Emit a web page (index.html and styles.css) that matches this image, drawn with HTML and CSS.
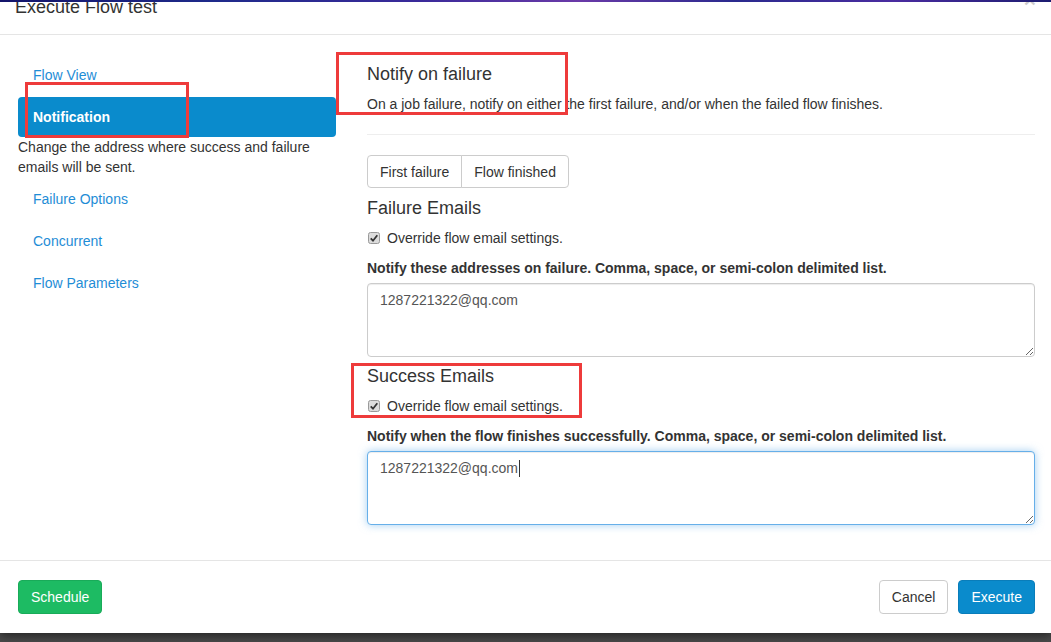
FILE: index.html
```html
<!DOCTYPE html>
<html lang="en">
<head>
<meta charset="utf-8">
<title>Execute Flow test</title>
<link rel="stylesheet" href="styles.css">
</head>
<body>
<div class="topstrip"></div>
<div class="modal">
  <div class="modal-header">
    <button class="close" type="button">&times;</button>
    <h4 class="modal-title">Execute Flow test</h4>
  </div>
  <div class="modal-body">
    <div class="sidebar">
      <ul class="nav">
        <li><a href="#">Flow View</a></li>
        <li class="active">
          <a href="#">Notification</a>
          <div class="nav-desc">Change the address where success and failure emails will be sent.</div>
        </li>
        <li><a href="#">Failure Options</a></li>
        <li><a href="#">Concurrent</a></li>
        <li><a href="#">Flow Parameters</a></li>
      </ul>
    </div>
    <div class="content">
      <h4 class="first">Notify on failure</h4>
      <p class="help">On a job failure, notify on either the first failure, and/or when the failed flow finishes.</p>
      <hr class="sep">
      <div class="btn-group">
        <button class="btn btn-default" type="button">First failure</button>
        <button class="btn btn-default" type="button">Flow finished</button>
      </div>
      <h4 class="after-group">Failure Emails</h4>
      <div class="checkbox">
        <span class="cb"><svg width="12" height="12" viewBox="0 0 12 12"><rect x="0.5" y="0.5" width="11" height="11" rx="2" fill="#dcdcdc" stroke="#9a9a9a"/><path d="M2.7 6.3 L5 8.7 L9.3 3.3" fill="none" stroke="#333" stroke-width="1.8"/></svg></span>
        <span>Override flow email settings.</span>
      </div>
      <label class="field-label">Notify these addresses on failure. Comma, space, or semi-colon delimited list.</label>
      <textarea class="form-control" rows="3">1287221322@qq.com</textarea>
      <h4 class="tight">Success Emails</h4>
      <div class="checkbox">
        <span class="cb"><svg width="12" height="12" viewBox="0 0 12 12"><rect x="0.5" y="0.5" width="11" height="11" rx="2" fill="#dcdcdc" stroke="#9a9a9a"/><path d="M2.7 6.3 L5 8.7 L9.3 3.3" fill="none" stroke="#333" stroke-width="1.8"/></svg></span>
        <span>Override flow email settings.</span>
      </div>
      <label class="field-label">Notify when the flow finishes successfully. Comma, space, or semi-colon delimited list.</label>
      <div class="field-wrap">
        <textarea class="form-control focused" rows="3">1287221322@qq.com</textarea>
        <span class="caret"></span>
      </div>
    </div>
  </div>
  <div class="modal-footer">
    <button class="btn btn-success" type="button">Schedule</button>
    <div class="footer-right">
      <button class="btn btn-default" type="button">Cancel</button>
      <button class="btn btn-primary" type="button">Execute</button>
    </div>
  </div>
</div>
<div class="annot annot-1"></div>
<div class="annot annot-2"></div>
<div class="annot annot-3"></div>
</body>
</html>
```

FILE: styles.css
```css
* { box-sizing: border-box; }

html, body {
  margin: 0;
  padding: 0;
  height: 100%;
}

body {
  background: linear-gradient(180deg, #666 0%, #4a4a4a 100%);
  font-family: "Liberation Sans", Arial, Helvetica, sans-serif;
  font-size: 14px;
  line-height: 20px;
  color: #333;
  overflow: hidden;
  position: relative;
}

.topstrip {
  position: absolute;
  left: 0;
  top: 0;
  width: 100%;
  height: 2px;
  z-index: 5;
  background: linear-gradient(90deg, #14146a 0%, #1e2a8a 20%, #3a2a9a 40%, #6a3aa8 55%, #2a2a8e 70%, #4a2ca0 85%, #1c1c70 100%);
}

.modal {
  width: 1051px;
  margin-top: -22px;
  background: #fff;
  box-shadow: 0 3px 9px rgba(0, 0, 0, 0.5);
}

.modal-header {
  padding: 16px 15px 14px;
  border-bottom: 1px solid #e5e5e5;
}

.modal-title {
  margin: 0;
  font-size: 18px;
  font-weight: normal;
  line-height: 26px;
  color: #333;
}

.close {
  float: right;
  margin-top: -5px;
  padding: 0;
  border: 0;
  background: transparent;
  font-family: "Liberation Sans", Arial, sans-serif;
  font-size: 21px;
  font-weight: bold;
  line-height: 1;
  color: #000;
  opacity: 0.2;
}

.modal-body {
  display: grid;
  grid-template-columns: 318px 1fr;
  column-gap: 31px;
  padding: 20px 16px 35px 18px;
}

.nav {
  list-style: none;
  margin: 0;
  padding: 0;
}

.nav li + li { margin-top: 2px; }

.nav a {
  display: block;
  padding: 10px 15px;
  line-height: 20px;
  color: #1f8dd6;
  text-decoration: none;
  border-radius: 4px;
}

.nav .active a {
  background: #0a8bcc;
  color: #fff;
  font-weight: bold;
}

.nav-desc {
  color: #333;
  line-height: 20px;
}

.content h4 {
  margin: 10px 0;
  font-size: 18px;
  font-weight: normal;
  line-height: 20px;
  color: #333;
}

.content h4.first { margin-top: 9px; }
.content h4.after-group { margin-top: 10px; }
.content h4.tight { margin-top: 9px; }

.help {
  margin: 0;
  line-height: 20px;
}

.sep {
  margin: 20px 0;
  border: 0;
  border-top: 1px solid #eee;
}

.btn-group {
  display: flex;
}

.btn {
  display: inline-block;
  padding: 6px 12px;
  font-family: "Liberation Sans", Arial, sans-serif;
  font-size: 14px;
  line-height: 20px;
  border: 1px solid transparent;
  border-radius: 4px;
  cursor: pointer;
}

.btn-group .btn {
  padding-top: 6px;
  padding-bottom: 5px;
}

.btn-default {
  background: #fff;
  border-color: #ccc;
  color: #333;
}

.btn-group .btn:first-child {
  border-top-right-radius: 0;
  border-bottom-right-radius: 0;
}

.btn-group .btn + .btn {
  margin-left: -1px;
  border-top-left-radius: 0;
  border-bottom-left-radius: 0;
}

.btn-success {
  background: #1dbb63;
  border-color: #19ab59;
  color: #fff;
}

.btn-primary {
  background: #0a8bcc;
  border-color: #097dba;
  color: #fff;
}

.checkbox {
  display: flex;
  align-items: center;
  gap: 7px;
  margin: 10px 0;
  padding-left: 1px;
  line-height: 20px;
}

.cb {
  display: inline-flex;
  width: 12px;
  height: 12px;
}

.field-label {
  display: inline-block;
  margin-bottom: 5px;
  font-weight: bold;
  line-height: 20px;
}

.field-wrap {
  position: relative;
}

.form-control {
  display: block;
  width: 100%;
  height: 74px;
  padding: 6px 12px;
  font-family: "Liberation Sans", Arial, sans-serif;
  font-size: 14px;
  line-height: 20px;
  color: #555;
  background: #fff;
  border: 1px solid #ccc;
  border-radius: 4px;
  box-shadow: inset 0 1px 1px rgba(0, 0, 0, 0.075);
  resize: vertical;
}

.form-control.focused {
  border-color: #66afe9;
  box-shadow: inset 0 1px 1px rgba(0, 0, 0, 0.075), 0 0 8px rgba(102, 175, 233, 0.6);
  outline: 0;
}

.caret {
  position: absolute;
  left: 152px;
  top: 9px;
  width: 1px;
  height: 17px;
  background: #333;
}

.modal-footer {
  display: flex;
  justify-content: space-between;
  align-items: center;
  padding: 19px 16px 19px 18px;
  border-top: 1px solid #e5e5e5;
}

.footer-right {
  display: flex;
  gap: 10px;
}

.annot {
  position: absolute;
  border: 3px solid #ee3b3b;
  z-index: 4;
}

.annot-1 { left: 336px; top: 52px; width: 232px; height: 63px; }
.annot-2 { left: 25px; top: 82px; width: 164px; height: 56px; }
.annot-3 { left: 351px; top: 363px; width: 231px; height: 55px; }
```
